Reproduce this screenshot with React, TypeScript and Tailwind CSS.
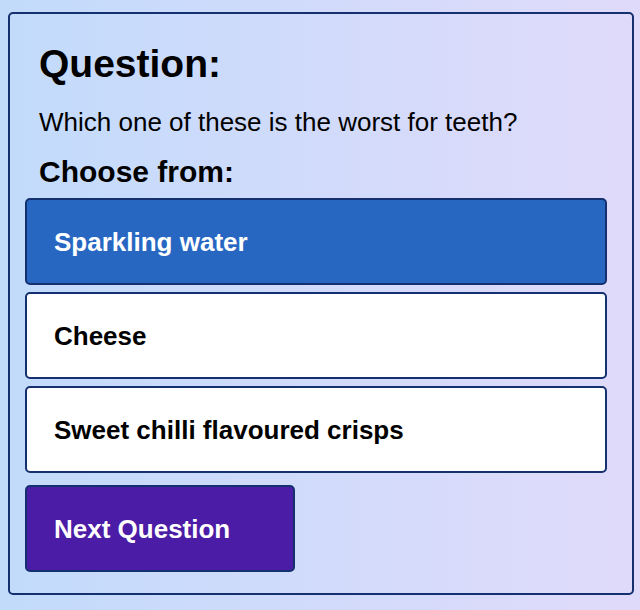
import React, { useState } from 'react';

const options = ['Sparkling water', 'Cheese', 'Sweet chilli flavoured crisps'];

const App = () => {
  const [selected, setSelected] = useState(0);

  return (
    <div
      className="min-h-[610px] w-[640px] bg-gradient-to-r from-[#c2dbfb] to-[#e0dafa] pt-3 pl-2 pb-[15px]"
      style={{ fontFamily: '"Liberation Sans", Arial, sans-serif' }}
    >
      <div className="w-[626px] h-[583px] rounded-[5px] border-2 border-[#15306e] pl-[15px] pr-[25px] pt-[30px]">
        {/* Question */}
        <div className="px-[14px]">
          <h1 className="text-[39px] leading-none font-bold text-black">Question:</h1>
          <p className="mt-[26px] text-[26px] leading-none text-black">
            Which one of these is the worst for teeth?
          </p>
          <h2 className="mt-[22px] text-[30px] leading-none font-bold text-black">Choose from:</h2>
        </div>

        {/* Options */}
        <div className="mt-[11px] flex flex-col gap-[7px]">
          {options.map((opt, i) => (
            <button
              key={opt}
              onClick={() => setSelected(i)}
              className={
                i === selected
                  ? 'h-[87px] w-full rounded-[5px] border-2 border-[#15306e] bg-[#2767c2] pl-[27px] text-left text-[26px] leading-none font-bold text-white'
                  : 'h-[87px] w-full rounded-[5px] border-2 border-[#15306e] bg-white pl-[27px] text-left text-[26px] leading-none font-bold text-black'
              }
            >
              {opt}
            </button>
          ))}
        </div>

        <button className="mt-[12px] h-[87px] w-[270px] rounded-[5px] border-2 border-[#15306e] bg-[#4b1ca6] pl-[27px] text-left text-[26px] leading-none font-bold text-white">
          Next Question
        </button>
      </div>
    </div>
  );
};

export default App;
